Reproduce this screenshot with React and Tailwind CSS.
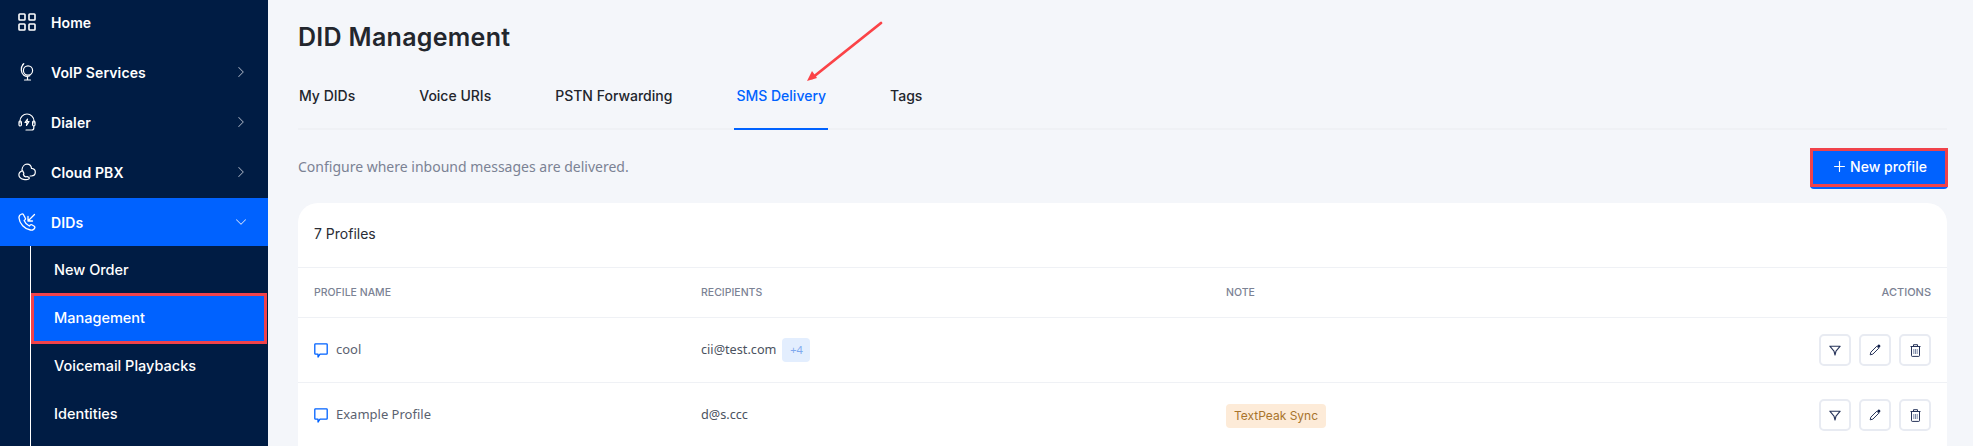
import React from 'react';
import { ChevronRight, ChevronDown, Plus } from 'lucide-react';

const heading = { fontFamily: 'Inter, "Noto Sans", sans-serif' };

const GridIcon = () => (
    <svg width="18" height="18" viewBox="0 0 18 18" fill="none" stroke="currentColor" strokeWidth="1.6">
        <rect x="1" y="1" width="6" height="6" rx="0.8" />
        <rect x="11" y="1" width="6" height="6" rx="0.8" />
        <rect x="1" y="11" width="6" height="6" rx="0.8" />
        <rect x="11" y="11" width="6" height="6" rx="0.8" />
    </svg>
);

const GlobeIcon = () => (
    <svg width="18" height="18" viewBox="0 0 18 18" fill="none" stroke="currentColor" strokeWidth="1.2" strokeLinecap="round">
        <circle cx="10" cy="7.5" r="4.6" />
        <path d="M5 1.5C2.4 4.5 2.8 10 5.800 12.200c1.800 1.300 4.200 1.400 6 .5" />
        <path d="M5 1.500 5.800.6M9.500 14v2.600M6.500 17h6" />
    </svg>
);

const HeadsetIcon = () => (
    <svg width="18" height="18" viewBox="0 0 18 18" fill="none" stroke="currentColor" strokeWidth="1.2" strokeLinecap="round" strokeLinejoin="round">
        <path d="M2 10V8a7 7 0 0 1 14 0v2" />
        <rect x="1" y="8" width="2.4" height="5" rx="1.2" />
        <rect x="14.6" y="8" width="2.4" height="5" rx="1.2" />
        <path d="M15.800 13v2a2 2 0 0 1-2 2H8" />
        <path d="M9.500 6 7 9.500h2l-.5 3 2.500-4H9z" />
    </svg>
);

const CloudIcon = () => (
    <svg width="18" height="18" viewBox="0 0 18 18" fill="none" stroke="currentColor" strokeWidth="1.200" strokeLinecap="round" strokeLinejoin="round">
        <path d="M4 6.800C4.300 3.600 6.400 1.200 9 1.200c2.600 0 4.300 2 4.500 4.200 2.200.2 3.800 1.800 3.800 3.700 0 2.300-1.800 3.900-4 3.900h-1.200" />
        <path d="M4.500 7.600C2.400 8.400.8 10 .9 12c.1 2.400 2.300 3.800 4.600 4.300 2 .5 4 .5 5.200-.2.700-.4.800-1.500 0-1.900l-1.400-.6c-.5-.2-1 0-1.400.4-1.200-.3-2.200-1.300-2.500-2.500.4-.4.600-.9.400-1.400z" />
    </svg>
);

const PhoneInIcon = () => (
    <svg width="18" height="18" viewBox="0 0 18 18" fill="none" stroke="currentColor" strokeWidth="1.300" strokeLinecap="round" strokeLinejoin="round">
        <path d="M3.800 1C2 1.600.8 3 1 5c.5 5.600 5.500 11 11.400 12 2 .3 3.800-.6 4.400-2.300.2-.6 0-1.100-.5-1.400l-2.500-1.500c-.5-.3-1.100-.2-1.500.2l-1 1c-2.300-1-4.300-3.100-5.200-5.400l1-1c.4-.4.5-1 .2-1.500L5.500 1.700C5.100 1.100 4.500.8 3.800 1z" />
        <path d="M16.500 1.500 10 8M10 3.500V8h4.500" />
    </svg>
);

const ChatIcon = () => (
    <svg width="14" height="15" viewBox="0 0 14 15" fill="none" stroke="#0062ff" strokeWidth="1.300" strokeLinejoin="round">
        <path d="M1.500.8h11c.4 0 .7.3.7.7v9c0 .4-.3.7-.7.7H6L4 14v-2.800H1.500c-.4 0-.7-.3-.7-.7v-9c0-.4.3-.7.7-.7z" />
    </svg>
);

const FunnelIcon = () => (
    <svg width="12" height="11" viewBox="0 0 12 11" fill="none" stroke="#27345a" strokeWidth="1.100" strokeLinejoin="round">
        <path d="M.8 1.200h10.400L7 6.200 6 10 5 6.200z" />
    </svg>
);

const PencilIcon = () => (
    <svg width="12" height="12" viewBox="0 0 12 12" fill="none">
        <path d="M1.200 10.800 1.800 8.200 7.800 2.200 9.800 4.200 3.800 10.200z" stroke="#27345a" strokeWidth="1" strokeLinejoin="round" />
        <path d="M8 2 9.300.8c.3-.3.800-.3 1.100 0l.8.8c.3.3.3.8 0 1.100L10 4z" fill="#12204a" />
    </svg>
);

const TrashIcon = () => (
    <svg width="11" height="13" viewBox="0 0 11 13" fill="none" stroke="#27345a" strokeWidth="1">
        <path d="M3.500 2V.7h4V2M.5 2.500h10" />
        <path d="M1.500 2.500v9.200c0 .4.300.7.700.7h6.600c.4 0 .7-.3.700-.7V2.500" />
        <path d="M3.800 5v5M5.500 5v5M7.200 5v5" stroke="#7d8aa8" />
    </svg>
);

const SideRow = ({ icon, label, active, chevron }) => (
    <div className={`h-12 flex items-center pl-[18px] pr-[18px] text-white ${active ? 'bg-[#0062ff]' : ''}`}>
        <span className="w-[33px] shrink-0">{icon}</span>
        <span className="flex-1 text-[14px] font-semibold tracking-[0.1px]" style={heading}>{label}</span>
        {chevron === 'right' && <ChevronRight size={18} strokeWidth={1.400} className="text-[#9aa5b8]" />}
        {chevron === 'down' && <ChevronDown size={18} strokeWidth={1.400} className="text-[#c4d8fc]" />}
    </div>
);

const SubRow = ({ label, selected }) => (
    <div className={`relative h-12 flex items-center pl-[23px] text-white text-[14.5px] font-medium ${selected ? 'bg-[#0062ff]' : ''}`} style={heading}>
        {label}
        {selected && <div className="absolute left-0 right-0 -top-px -bottom-[2px] border-[3px] border-[#f0424a]" />}
    </div>
);

const ActionButton = ({ children }) => (
    <button className="w-8 h-8 flex items-center justify-center bg-white border-2 border-[#e8ebf2] rounded-[5px]">
        {children}
    </button>
);

const ProfileRow = ({ name, recipient, extra, note }) => (
    <div className="h-[65px] grid grid-cols-[387px_525px_1fr_auto] items-center px-4 border-t border-[#eff1f5]">
        <div className="flex items-center gap-[8px] text-[#5b6270] text-[13px]">
            <ChatIcon />
            <span>{name}</span>
        </div>
        <div className="flex items-center gap-[6px] text-[#4b5260] text-[12.7px]">
            <span>{recipient}</span>
            {extra && <span className="h-6 w-7 flex items-center justify-center rounded-[4px] bg-[#e3eefe] text-[#7fa9ee] text-[11px]">{extra}</span>}
        </div>
        <div>
            {note && <span className="inline-flex items-center h-6 px-2 rounded-[4px] bg-[#fdebd8] text-[#a8742c] text-[12px]" style={heading}>{note}</span>}
        </div>
        <div className="flex items-center gap-2">
            <ActionButton><FunnelIcon /></ActionButton>
            <ActionButton><PencilIcon /></ActionButton>
            <ActionButton><TrashIcon /></ActionButton>
        </div>
    </div>
);

const App = () => {
    const tabs = ['My DIDs', 'Voice URIs', 'PSTN Forwarding', 'SMS Delivery', 'Tags'];

    return (
        <div className="relative h-[446px] flex overflow-hidden bg-[#f4f6fa]" style={{ fontFamily: '"Noto Sans", sans-serif' }}>
            <aside className="w-[268px] shrink-0 bg-[#001c44]">
                <div className="-mt-[2px] flex flex-col gap-[2px] pb-px">
                    <SideRow icon={<GridIcon />} label="Home" />
                    <SideRow icon={<GlobeIcon />} label="VoIP Services" chevron="right" />
                    <SideRow icon={<HeadsetIcon />} label="Dialer" chevron="right" />
                    <SideRow icon={<CloudIcon />} label="Cloud PBX" chevron="right" />
                    <SideRow icon={<PhoneInIcon />} label="DIDs" chevron="down" active />
                </div>
                <div className="ml-[30px] mr-px border-l border-white h-[300px] -mt-px">
                    <SubRow label="New Order" />
                    <SubRow label="Management" selected />
                    <SubRow label="Voicemail Playbacks" />
                    <SubRow label="Identities" />
                </div>
            </aside>

            <main className="flex-1 pl-[30px] pr-[26px] min-w-0">
                <h1 className="pt-[22px] h-[68px] text-[25px] leading-[30px] font-semibold tracking-[0.3px] text-[#23262d]" style={heading}>DID Management</h1>

                <div className="h-[62px] pl-px flex items-stretch border-b-2 border-[#eff1f5]">
                    {tabs.map((tab) => (
                        <div
                            key={tab}
                            className={`relative mr-[64px] flex items-center text-[14px] font-medium ${tab === 'SMS Delivery' ? 'text-[#0062ff]' : 'text-[#22252c]'}`}
                            style={heading}
                        >
                            <span className="pb-[5px]">{tab}</span>
                            {tab === 'SMS Delivery' && <span className="absolute -left-[2px] -right-[2px] -bottom-[2px] h-[2px] bg-[#0062ff]" />}
                        </div>
                    ))}
                </div>

                <div className="h-[73px] flex items-center justify-between">
                    <p className="text-[14px] text-[#7b8294] pb-[1px]">Configure where inbound messages are delivered.</p>
                    <div className="relative -mr-px mt-[3px]">
                        <button className="w-[138px] h-[41px] pb-[3px] flex items-center justify-center gap-[2px] rounded-[4px] bg-[#0062ff] text-white text-[14px] font-medium" style={heading}>
                            <Plus size={17} strokeWidth={1.600} />
                            New profile
                        </button>
                        <div className="absolute left-0 right-0 top-0 h-[39px] border-[3px] border-[#f0424a]" />
                    </div>
                </div>

                <section className="bg-white rounded-t-[20px]">
                    <div className="h-[64px] px-4 pb-[3px] flex items-center text-[14px] text-[#2a2d35]" style={heading}>7 Profiles</div>
                    <div className="h-[50px] grid grid-cols-[387px_525px_1fr_auto] items-center px-4 border-t border-[#eff1f5] text-[10.5px] font-medium text-[#7b8294]" style={heading}>
                        <span>PROFILE NAME</span>
                        <span>RECIPIENTS</span>
                        <span>NOTE</span>
                        <span className="text-[11px]">ACTIONS</span>
                    </div>
                    <ProfileRow name="cool" recipient="cii@test.com" extra="+4" />
                    <ProfileRow name="Example Profile" recipient="d@s.ccc" note="TextPeak Sync" />
                </section>
            </main>

            {/* red annotation arrow pointing at the SMS Delivery tab */}
            <svg className="absolute left-[800px] top-[18px]" width="90" height="70" viewBox="0 0 90 70" fill="none">
                <path d="M81 5 12 60" stroke="#fb4347" strokeWidth="2.800" strokeLinecap="round" />
                <path d="M7 63 12 53 17 60z" fill="#fb4347" />
            </svg>
        </div>
    );
};

export default App;
